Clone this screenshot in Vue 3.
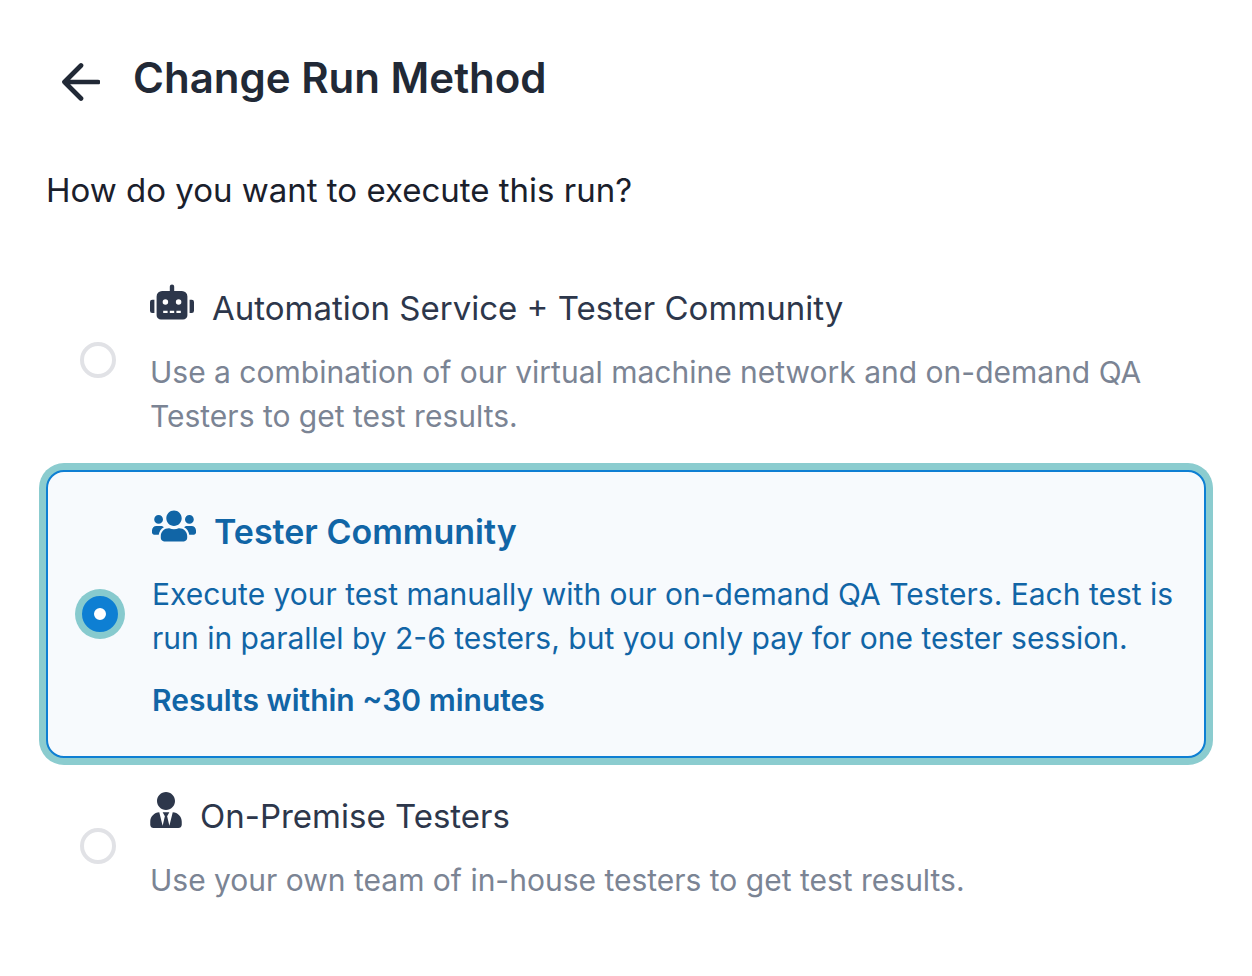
<script setup>
import { ref } from 'vue'

const selected = ref('community')

const options = [
  {
    id: 'automation',
    title: 'Automation Service + Tester Community',
    text: 'Use a combination of our virtual machine network and on-demand QA Testers to get test results.',
    wide: true,
    icon: 'M32,224H64V416H32A31.96,31.96,0,0,1,0,384V256A31.96,31.96,0,0,1,32,224Zm512-48V448a64.06,64.06,0,0,1-64,64H160a64.06,64.06,0,0,1-64-64V176a79.974,79.974,0,0,1,80-80H288V32a32,32,0,0,1,64,0V96H464A79.974,79.974,0,0,1,544,176ZM264,256a40,40,0,1,0-40,40A39.997,39.997,0,0,0,264,256Zm-8,128H192v32h64Zm96,0H288v32h64ZM456,256a40,40,0,1,0-40,40A39.997,39.997,0,0,0,456,256Zm-8,128H384v32h64ZM640,256V384a31.96,31.96,0,0,1-32,32H576V224h32A31.96,31.96,0,0,1,640,256Z',
  },
  {
    id: 'community',
    title: 'Tester Community',
    text: 'Execute your test manually with our on-demand QA Testers. Each test is run in parallel by 2-6 testers, but you only pay for one tester session.',
    note: 'Results within ~30 minutes',
    wide: true,
    icon: 'M96 224c35.3 0 64-28.7 64-64s-28.7-64-64-64-64 28.7-64 64 28.7 64 64 64zm448 0c35.3 0 64-28.7 64-64s-28.7-64-64-64-64 28.7-64 64 28.7 64 64 64zm32 32h-64c-17.6 0-33.5 7.1-45.1 18.6 40.3 22.1 68.9 62 75.1 109.4h66c17.7 0 32-14.3 32-32v-32c0-35.3-28.7-64-64-64zm-256 0c61.9 0 112-50.1 112-112S381.9 32 320 32 208 82.1 208 144s50.1 112 112 112zm76.8 32h-8.3c-20.8 10-43.9 16-68.5 16s-47.6-6-68.5-16h-8.3C179.6 288 128 339.6 128 403.2V432c0 26.5 21.5 48 48 48h288c26.5 0 48-21.5 48-48v-28.8c0-63.6-51.6-115.2-115.2-115.2zm-223.7-13.4C161.5 263.1 145.6 256 128 256H64c-35.3 0-64 28.7-64 64v32c0 17.7 14.3 32 32 32h65.9c6.3-47.4 34.9-87.3 75.2-109.4z',
  },
  {
    id: 'on-premise',
    title: 'On-Premise Testers',
    text: 'Use your own team of in-house testers to get test results.',
    wide: false,
    icon: 'M224 256c70.7 0 128-57.3 128-128S294.7 0 224 0 96 57.3 96 128s57.3 128 128 128zm95.8 32.6L272 480l-32-136 32-56h-96l32 56-32 136-47.8-191.4C56.9 292 0 350.3 0 422.4V464c0 26.5 21.5 48 48 48h352c26.5 0 48-21.5 48-48v-41.6c0-72.1-56.9-130.4-128.2-133.8z',
  },
]
</script>

<template>
  <main class="page">
    <header class="header">
      <button class="back" type="button" aria-label="Back">
        <svg viewBox="0 0 40 40" aria-hidden="true">
          <path d="M21 3.5 4.5 20 21 36.500M4.500 20H38" />
        </svg>
      </button>
      <h1 class="title">Change Run Method</h1>
    </header>

    <fieldset class="methods">
      <legend class="question">How do you want to execute this run?</legend>
      <label
        v-for="option in options"
        :key="option.id"
        class="option"
        :class="{ selected: selected === option.id }"
        :for="option.id"
      >
        <input :id="option.id" v-model="selected" class="radio" type="radio" name="method" :value="option.id" />
        <span class="body">
          <span class="name">
            <svg
              class="icon"
              :class="{ wide: option.wide }"
              :viewBox="option.wide ? '0 0 640 512' : '0 0 448 512'"
              aria-hidden="true"
            >
              <path :d="option.icon" />
            </svg>
            <span>{{ option.title }}</span>
          </span>
          <span class="text">{{ option.text }}</span>
          <strong v-if="option.note" class="note">{{ option.note }}</strong>
        </span>
      </label>
    </fieldset>
  </main>
</template>

<style>
body {
  margin: 0;
  background: #fff;
}
</style>

<style scoped>
.page {
  box-sizing: border-box;
  padding: 46px 46px 42px;
  font-family: Inter, "Liberation Sans", sans-serif;
  color: #1a202c;
}

.header {
  display: flex;
  align-items: center;
  gap: 33px;
  padding-left: 14px;
}

.back {
  display: flex;
  padding: 8px 0 0;
  border: 0;
  background: none;
  color: #212936;
  cursor: pointer;
}

.back svg {
  width: 40px;
  height: 40px;
  fill: none;
  stroke: currentColor;
  stroke-width: 4.7;
  stroke-linecap: round;
  stroke-linejoin: round;
}

.title {
  margin: 0;
  font-size: 42px;
  line-height: 64px;
  font-weight: 600;
  color: #212936;
}

.methods {
  min-width: 0;
  margin: 0;
  padding: 0;
  border: 0;
}

.question {
  padding: 54px 0 34px;
  font-size: 33px;
  line-height: 52px;
}

.option {
  display: flex;
  align-items: center;
  gap: 34px;
  padding: 32px 24px 32px 34px;
  color: #2d374b;
  cursor: pointer;
}

.option.selected {
  padding: 34px 24px 34px 34px;
  border: 2px solid #0e7fd3;
  border-radius: 18px;
  background: #f7fafd;
  box-shadow: 0 0 0 7px #8bcccf;
  color: #1165a6;
}

.radio {
  flex: none;
  width: 36px;
  height: 36px;
  margin: 0;
  border: 4px solid #e1e2e6;
  border-radius: 50%;
  background: #fff;
  appearance: none;
}

.radio:checked {
  border: 12px solid #0e7fd3;
  box-shadow: 0 0 0 7px #87cace;
}

.body {
  flex: 1;
  min-width: 0;
}

.name {
  display: flex;
  align-items: flex-start;
  gap: 18px;
  margin-bottom: 16px;
  font-size: 33px;
  line-height: 52px;
}

.selected .name {
  margin-bottom: 14px;
  font-size: 34px;
  font-weight: 600;
}

.icon {
  flex: none;
  width: 32px;
  height: 36px;
  margin-top: 2px;
  fill: currentColor;
}

.icon.wide {
  width: 44px;
}

.text {
  display: block;
  font-size: 30px;
  line-height: 44px;
  color: #7b8494;
}

.selected .text {
  color: inherit;
}

.note {
  display: block;
  margin-top: 18px;
  font-size: 30px;
  line-height: 44px;
  font-weight: 600;
}
</style>
